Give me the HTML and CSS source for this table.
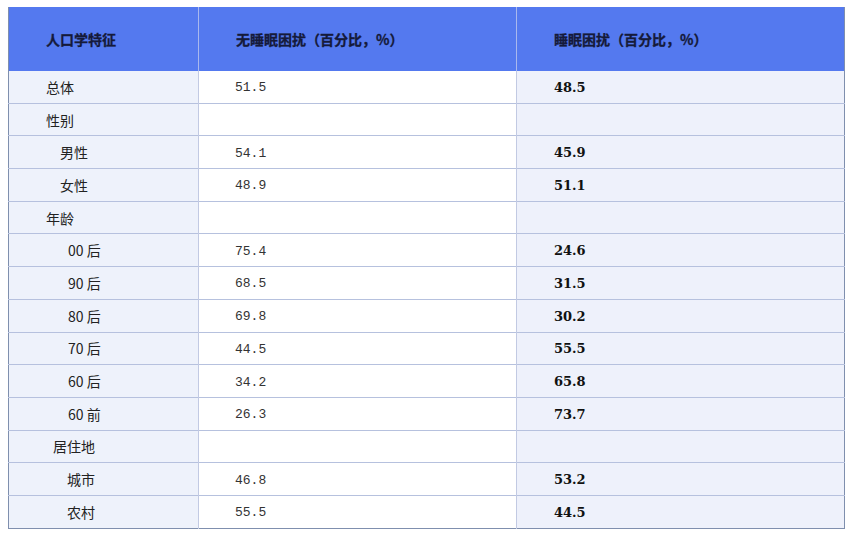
FILE: index.html
```html
<!DOCTYPE html>
<html lang="zh">
<head>
<meta charset="utf-8">
<link rel="stylesheet" href="styles.css">
</head>
<body>
<table class="data">
  <colgroup>
    <col class="c1"><col class="c2"><col class="c3">
  </colgroup>
  <thead>
    <tr>
      <th>人口学特征</th>
      <th>无睡眠困扰（百分比，%）</th>
      <th>睡眠困扰（百分比，%）</th>
    </tr>
  </thead>
  <tbody>
    <tr><td class="lbl">总体</td><td class="num"><span>51.5</span></td><td class="bold"><span>48.5</span></td></tr>
    <tr><td class="lbl">性别</td><td class="num"></td><td class="bold"></td></tr>
    <tr><td class="lbl sub1">男性</td><td class="num"><span>54.1</span></td><td class="bold"><span>45.9</span></td></tr>
    <tr><td class="lbl sub1">女性</td><td class="num"><span>48.9</span></td><td class="bold"><span>51.1</span></td></tr>
    <tr><td class="lbl">年龄</td><td class="num"></td><td class="bold"></td></tr>
    <tr><td class="lbl sub2">00 后</td><td class="num"><span>75.4</span></td><td class="bold"><span>24.6</span></td></tr>
    <tr><td class="lbl sub2">90 后</td><td class="num"><span>68.5</span></td><td class="bold"><span>31.5</span></td></tr>
    <tr><td class="lbl sub2">80 后</td><td class="num"><span>69.8</span></td><td class="bold"><span>30.2</span></td></tr>
    <tr><td class="lbl sub2">70 后</td><td class="num"><span>44.5</span></td><td class="bold"><span>55.5</span></td></tr>
    <tr><td class="lbl sub2">60 后</td><td class="num"><span>34.2</span></td><td class="bold"><span>65.8</span></td></tr>
    <tr><td class="lbl sub2">60 前</td><td class="num"><span>26.3</span></td><td class="bold"><span>73.7</span></td></tr>
    <tr><td class="lbl sub3">居住地</td><td class="num"></td><td class="bold"></td></tr>
    <tr><td class="lbl sub4">城市</td><td class="num"><span>46.8</span></td><td class="bold"><span>53.2</span></td></tr>
    <tr><td class="lbl sub4">农村</td><td class="num"><span>55.5</span></td><td class="bold"><span>44.5</span></td></tr>
  </tbody>
</table>
</body>
</html>
```
FILE: styles.css
```css
html, body {
  margin: 0;
  padding: 0;
  background: #ffffff;
}
body {
  padding: 7px 0 0 8px;
  font-family: "Noto Sans CJK SC", "DejaVu Sans", sans-serif;
  font-size: 14px;
  color: #222;
}
.data {
  border-collapse: collapse;
  width: 836px;
  table-layout: fixed;
  border-left: 1px solid #7f8fae;
  border-right: 1px solid #7f8fae;
  border-bottom: 1px solid #7f8fae;
}
.c1 { width: 190px; }
.c2 { width: 318px; }
.c3 { width: 328px; }
.data th {
  background: #5479ef;
  height: 64px;
  padding: 0 0 0 37px;
  text-align: left;
  font-weight: bold;
  font-size: 14px;
  color: #151a3a;
  border-left: 1px solid #a9b8ee;
  -webkit-text-stroke: 0.3px #151a3a;
}
.data th:first-child { border-left: none; }
.data td {
  height: 31.7px;
  padding: 0 0 0 37px;
  border-top: 1px solid #b6c1de;
  border-left: 1px solid #c2cae3;
  vertical-align: middle;
  line-height: 16px;
}
.data tbody tr:first-child td { border-top: none; }
.data td.lbl {
  background: #eef2fb;
  border-left: none;
  color: #222;
}
.data td.sub1 { padding-left: 51px; }
.data td.sub2 { padding-left: 59px; }
.data td.sub3 { padding-left: 44px; }
.data td.sub4 { padding-left: 58px; }
.data td.num {
  background: #ffffff;
  padding-left: 36px;
}
.data td.num span {
  font-family: "Liberation Mono", "DejaVu Sans Mono", monospace;
  font-size: 13px;
  color: #333;
}
.data td.bold {
  background: #eef1fb;
}
.data td.bold span {
  font-family: "DejaVu Serif", "Liberation Serif", serif;
  font-weight: bold;
  font-size: 13px;
  color: #111;
}
```
